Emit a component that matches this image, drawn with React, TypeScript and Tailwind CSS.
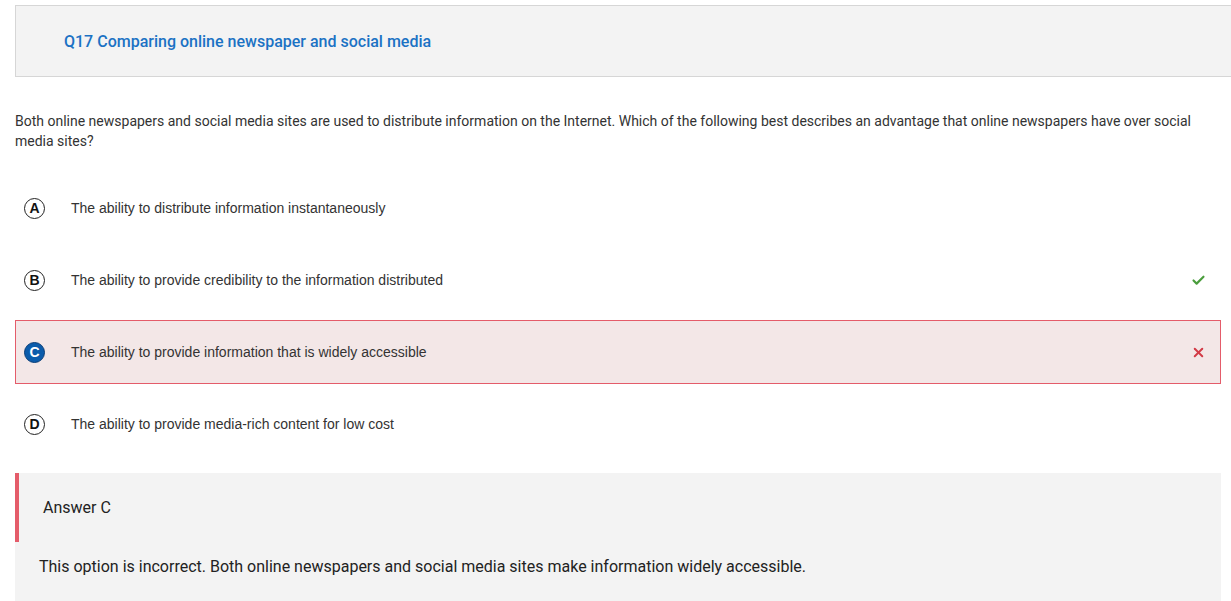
import { Check, X } from "lucide-react";

type Option = { key: string; text: string; state?: "correct" | "wrong" };

const options: Option[] = [
  { key: "A", text: "The ability to distribute information instantaneously" },
  { key: "B", text: "The ability to provide credibility to the information distributed", state: "correct" },
  { key: "C", text: "The ability to provide information that is widely accessible", state: "wrong" },
  { key: "D", text: "The ability to provide media-rich content for low cost" },
];

const OptionRow = ({ opt }: { opt: Option }) => {
  const wrong = opt.state === "wrong";
  return (
    <div
      className={
        wrong
          ? "flex items-center h-[64px] border border-[#e45c6a] bg-[#f3e7e7] pl-[8px] pr-[14px]"
          : "flex items-center h-[64px] border border-transparent pl-[8px] pr-[14px]"
      }
    >
      <div
        className={
          wrong
            ? "w-[21px] h-[21px] rounded-full bg-[#0b5cab] border-[1.5px] border-[#0b3f78] flex items-center justify-center text-white text-[14px] font-bold"
            : "w-[21px] h-[21px] rounded-full border-[1.5px] border-[#222] flex items-center justify-center text-[#111] text-[14px] font-bold"
        }
        style={{ fontFamily: '"Liberation Sans", Arial, sans-serif' }}
      >
        {opt.key}
      </div>
      <div className="ml-[26px] flex-1 text-[14px] text-[#333]" style={{ fontFamily: '"Liberation Sans", Arial, sans-serif' }}>
        {opt.text}
      </div>
      {opt.state === "correct" && <Check size={15} strokeWidth={3.4} className="text-[#4a9d3c]" />}
      {wrong && <X size={15} strokeWidth={3.2} className="text-[#d23a46]" />}
    </div>
  );
};

export default function App() {
  return (
    <div className="w-full h-[601px] overflow-hidden bg-white pl-[15px] pt-[5px]" style={{ fontFamily: "Roboto, sans-serif" }}>
      <div className="w-[1230px] h-[72px] bg-[#f3f3f3] border border-[#d6d6d6] flex items-center pl-[48px] pt-[2px]">
        <h2 className="text-[16px] font-medium text-[#1b72c4]">Q17 Comparing online newspaper and social media</h2>
      </div>
      <div className="w-[1206px]">
        <p className="mt-[34px] text-[14px] leading-[20px] text-[#333]">
          Both online newspapers and social media sites are used to distribute information on the Internet. Which of the following best describes an advantage that online newspapers have over social media sites?
        </p>
        <div className="mt-[25px] flex flex-col gap-[8px]">
          {options.map((o) => (
            <OptionRow key={o.key} opt={o} />
          ))}
        </div>
        <div className="mt-[17px] bg-[#f3f3f3] h-[140px]">
          <div className="border-l-4 border-[#e45c6a] h-[69px] flex items-center pl-[24px] text-[16px] text-[#222]">Answer C</div>
          <p className="pl-[24px] pt-[13px] text-[16px] text-[#222]">
            This option is incorrect. Both online newspapers and social media sites make information widely accessible.
          </p>
        </div>
      </div>
    </div>
  );
}
